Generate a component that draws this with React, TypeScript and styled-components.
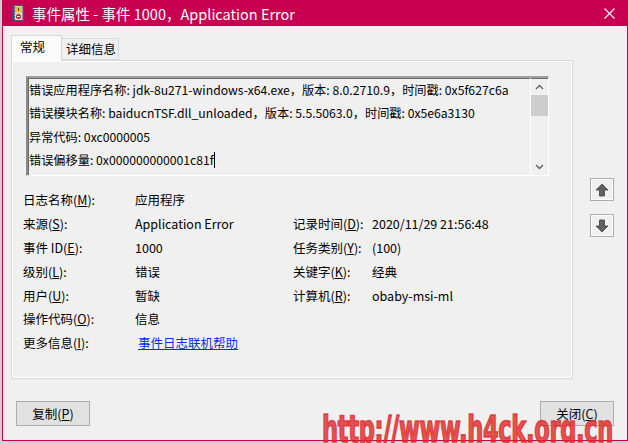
import styled, { createGlobalStyle } from "styled-components";

const GlobalStyle = createGlobalStyle`
  html, body {
    margin: 0;
    padding: 0;
    background: #cfcfcf;
  }
  body {
    font-family: "Noto Sans CJK SC", "Noto Sans", sans-serif;
    font-size: 12px;
    color: #000;
  }
`;

const Page = styled.div`
  width: 628px;
  height: 443px;
  padding-left: 2px;
  box-sizing: border-box;
  overflow: hidden;
  position: relative;
`;

const Window = styled.div`
  width: 626px;
  height: 441px;
  box-sizing: border-box;
  border: 1px solid #c7004f;
  border-top: none;
  background: #f0f0f0;
  display: flex;
  flex-direction: column;
`;

const TitleBar = styled.div`
  height: 26px;
  margin: 0 -1px;
  background: #c7004f;
  display: flex;
  align-items: center;
  padding: 0 0 0 10px;
  color: #fff;
  font-size: 14.5px;
  flex-shrink: 0;
`;

const TitleText = styled.span`
  margin-left: 8px;
  flex: 1;
  white-space: nowrap;
`;

const CloseButton = styled.div`
  width: 30px;
  height: 26px;
  display: flex;
  align-items: center;
  justify-content: center;
  margin-right: 4px;
`;

const Body = styled.div`
  flex: 1;
  padding: 9px 0 0 8px;
  display: flex;
  flex-direction: column;
`;

const TopArea = styled.div`
  display: flex;
`;

const TabColumn = styled.div`
  width: 562px;
  display: flex;
  flex-direction: column;
`;

const TabStrip = styled.div`
  display: flex;
  align-items: flex-end;
  height: 25px;
  position: relative;
  z-index: 1;
`;

const Tab = styled.div<{ $active?: boolean }>`
  box-sizing: border-box;
  height: ${(p) => (p.$active ? "26px" : "22px")};
  padding: ${(p) => (p.$active ? "2px 0 0 8px" : "1px 0 0 4px")};
  width: ${(p) => (p.$active ? "51px" : "57px")};
  border: 1px solid #d9d9d9;
  border-bottom: ${(p) => (p.$active ? "none" : "1px solid #d9d9d9")};
  border-left: ${(p) => (p.$active ? "1px solid #d9d9d9" : "none")};
  background: ${(p) => (p.$active ? "#fbfbfb" : "#f0f0f0")};
  margin-bottom: ${(p) => (p.$active ? "-1px" : "0")};
  font-size: 12.5px;
  line-height: 18px;
`;

const Panel = styled.div`
  height: 319px;
  box-sizing: border-box;
  border: 1px solid #d9d9d9;
  box-shadow: inset 0 0 0 1px #ffffff;
  background: #f0f0f0;
  padding: 15px 0 0 14px;
`;

const TextBox = styled.div`
  width: 523px;
  height: 100px;
  box-sizing: border-box;
  border-top: 2px solid #a0a0a0;
  border-left: 2px solid #8a8a8a;
  border-right: 1px solid #ffffff;
  border-bottom: 1px solid #ffffff;
  box-shadow: inset 1px 1px 0 #6a6a6a;
  display: flex;
`;

const TextLines = styled.div`
  flex: 1;
  padding: 1px 0 0 1px;
  overflow: hidden;
`;

const TextLine = styled.div`
  height: 23.4px;
  line-height: 23.4px;
  white-space: nowrap;
  font-size: 12.2px;
`;

const Caret = styled.span`
  display: inline-block;
  width: 1px;
  height: 16px;
  background: #000;
  vertical-align: -3px;
`;

const ScrollBar = styled.div`
  width: 17px;
  border-left: 1px solid #ffffff;
  display: flex;
  flex-direction: column;
  align-items: center;
`;

const ScrollArrow = styled.div`
  height: 17px;
  width: 17px;
  display: flex;
  align-items: center;
  justify-content: center;
`;

const ScrollTrack = styled.div`
  flex: 1;
  width: 100%;
`;

const ScrollThumb = styled.div`
  height: 21px;
  background: #cdcdcd;
`;

const Fields = styled.div`
  display: grid;
  grid-template-columns: 112px 158px 79px auto;
  grid-auto-rows: 23.8px;
  align-items: center;
  margin: 12px 0 0 -3px;
  font-size: 12.5px;
`;

const Label = styled.span`
  white-space: nowrap;
`;

const Value = styled.span`
  white-space: nowrap;
`;

const Link = styled.a`
  color: #0a2cf0;
  text-decoration: underline;
  margin-left: 3px;
  white-space: nowrap;
  cursor: pointer;
`;

const SideColumn = styled.div`
  padding: 143px 0 0 17px;
  display: flex;
  flex-direction: column;
  gap: 13px;
`;

const ArrowButton = styled.div`
  width: 24px;
  height: 23px;
  box-sizing: border-box;
  border: 1px solid #adadad;
  background: #f0f0f0;
  box-shadow: inset 0 0 0 1px #fdfdfd;
  display: flex;
  align-items: center;
  justify-content: center;
`;

const ButtonRow = styled.div`
  display: flex;
  justify-content: space-between;
  margin: 22px 0 0 5px;
  width: 598px;
`;

const Button = styled.div`
  width: 74px;
  height: 25px;
  box-sizing: border-box;
  border: 1px solid #adadad;
  background: #e1e1e1;
  display: flex;
  align-items: center;
  justify-content: center;
  font-size: 12.5px;
`;

const Watermark = styled.div`
  position: absolute;
  left: 322px;
  top: 410px;
  font-family: "DejaVu Sans Condensed", "DejaVu Sans", sans-serif;
  font-weight: bold;
  font-size: 38px;
  line-height: 38px;
  letter-spacing: -0.5px;
  color: rgba(222, 40, 40, 0.8);
  -webkit-text-stroke: 1.6px rgba(222, 40, 40, 0.8);
  white-space: nowrap;
  transform: scaleX(0.66);
  transform-origin: left top;
  pointer-events: none;
`;

function EventIcon() {
  return (
    <svg width="12" height="16" viewBox="0 0 12 16">
      <rect x="2" y="0.5" width="9" height="15" fill="#d8d8e0" stroke="#4a5a80" />
      <rect x="3" y="1.5" width="7" height="6" fill="#f0c020" />
      <rect x="6" y="3" width="1" height="3" fill="#6a4a00" />
      <circle cx="6.5" cy="11.5" r="2.5" fill="#d02020" />
      <rect x="5" y="11" width="3" height="1" fill="#fff" />
      {[2, 5, 8, 11, 14].map((y) => (
        <rect key={y} x="0" y={y} width="3" height="1.5" fill="#3050a0" />
      ))}
    </svg>
  );
}

function CloseIcon() {
  return (
    <svg width="11" height="11" viewBox="0 0 11 11">
      <path d="M0.5 0.5 L10.5 10.5 M10.5 0.5 L0.5 10.5" stroke="#fff" strokeWidth="1.1" />
    </svg>
  );
}

function Chevron({ up }: { up?: boolean }) {
  return (
    <svg width="9" height="6" viewBox="0 0 9 6">
      <path
        d={up ? "M1 5 L4.5 1.5 L8 5" : "M1 1 L4.5 4.5 L8 1"}
        stroke="#606060"
        strokeWidth="1.4"
        fill="none"
      />
    </svg>
  );
}

function BlockArrow({ up }: { up?: boolean }) {
  return (
    <svg width="14" height="14" viewBox="0 0 14 14">
      <path
        d="M7 1 L13 7 L9.5 7 L9.5 13 L4.5 13 L4.5 7 L1 7 Z"
        fill="#606060"
        stroke="#404040"
        strokeWidth="0.8"
        transform={up ? undefined : "rotate(180 7 7)"}
      />
    </svg>
  );
}

const rows: [string, string, string?, string?, string?][] = [
  ["日志名称(", "M", "应用程序"],
  ["来源(", "S", "Application Error", "记录时间(D", "2020/11/29 21:56:48"],
  ["事件 ID(", "E", "1000", "任务类别(Y", "(100)"],
  ["级别(", "L", "错误", "关键字(K", "经典"],
  ["用户(", "U", "暂缺", "计算机(R", "obaby-msi-ml"],
  ["操作代码(", "O", "信息"],
];

function Accel({ text }: { text: string }) {
  const pre = text.slice(0, -1);
  const key = text.slice(-1);
  return (
    <Label>
      {pre}
      <u>{key}</u>):
    </Label>
  );
}

export default function App() {
  return (
    <Page>
      <GlobalStyle />
      <Window>
        <TitleBar>
          <EventIcon />
          <TitleText>事件属性 - 事件 1000，Application Error</TitleText>
          <CloseButton>
            <CloseIcon />
          </CloseButton>
        </TitleBar>
        <Body>
          <TopArea>
            <TabColumn>
              <TabStrip>
                <Tab $active>常规</Tab>
                <Tab>详细信息</Tab>
              </TabStrip>
              <Panel>
                <TextBox>
                  <TextLines>
                    <TextLine>
                      错误应用程序名称: jdk-8u271-windows-x64.exe，版本: 8.0.2710.9，时间戳: 0x5f627c6a
                    </TextLine>
                    <TextLine>
                      错误模块名称: baiducnTSF.dll_unloaded，版本: 5.5.5063.0，时间戳: 0x5e6a3130
                    </TextLine>
                    <TextLine>异常代码: 0xc0000005</TextLine>
                    <TextLine>
                      错误偏移量: 0x000000000001c81f
                      <Caret />
                    </TextLine>
                  </TextLines>
                  <ScrollBar>
                    <ScrollArrow>
                      <Chevron up />
                    </ScrollArrow>
                    <ScrollTrack>
                      <ScrollThumb />
                    </ScrollTrack>
                    <ScrollArrow>
                      <Chevron />
                    </ScrollArrow>
                  </ScrollBar>
                </TextBox>
                <Fields>
                  {rows.map(([label, key, value, label2, value2]) => (
                    <>
                      <Accel text={label + key} />
                      <Value>{value}</Value>
                      {label2 ? <Accel text={label2} /> : <span />}
                      <Value>{value2 ?? ""}</Value>
                    </>
                  ))}
                  <Accel text="更多信息(I" />
                  <Link>事件日志联机帮助</Link>
                </Fields>
              </Panel>
            </TabColumn>
            <SideColumn>
              <ArrowButton>
                <BlockArrow up />
              </ArrowButton>
              <ArrowButton>
                <BlockArrow />
              </ArrowButton>
            </SideColumn>
          </TopArea>
          <ButtonRow>
            <Button>
              复制(<u>P</u>)
            </Button>
            <Button>
              关闭(<u>C</u>)
            </Button>
          </ButtonRow>
        </Body>
      </Window>
      <Watermark>http://www.h4ck.org.cn</Watermark>
    </Page>
  );
}
